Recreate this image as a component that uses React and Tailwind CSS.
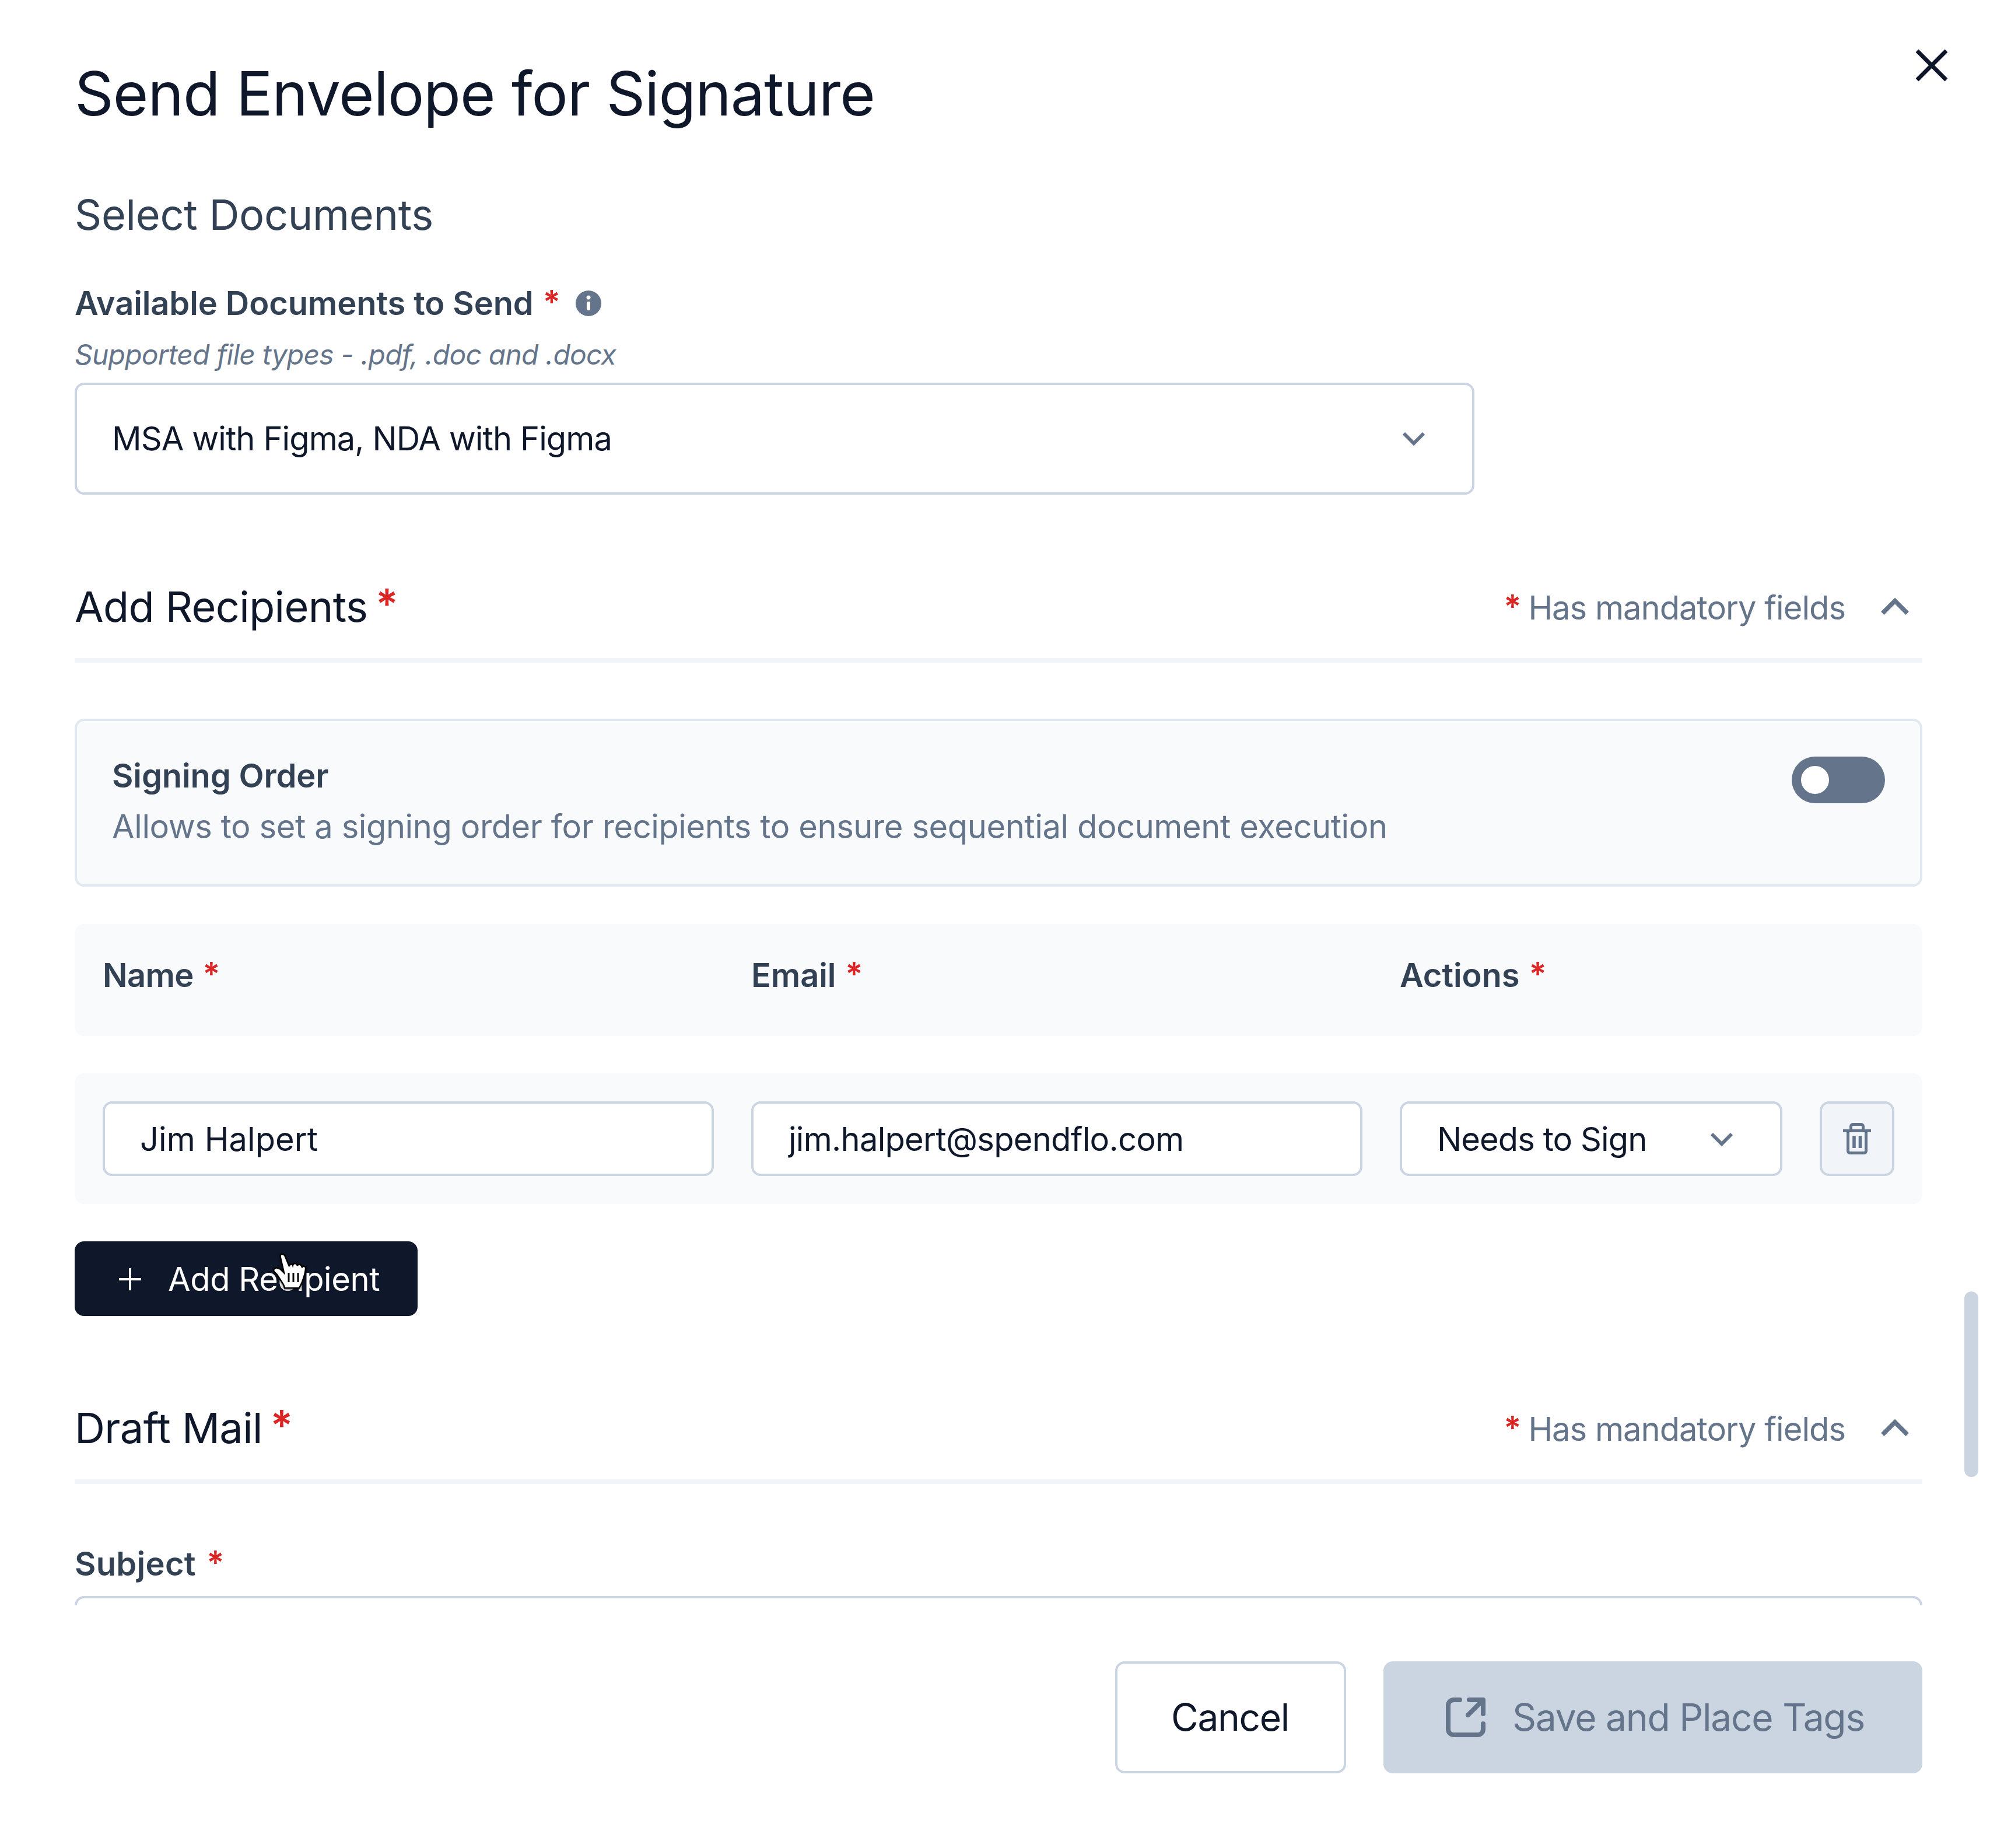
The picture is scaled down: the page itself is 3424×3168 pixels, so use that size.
const font = { fontFamily: '"Inter", "Noto Sans", sans-serif' };

function Star({ className = "" }) {
  return <span className={`text-[#dc2626] font-semibold ${className}`}>*</span>;
}

function Chevron({ up = false, className = "" }) {
  return (
    <svg viewBox="0 0 40 24" fill="none" className={className}>
      <path d={up ? "M3 21L20 4L37 21" : "M3 3L20 20L37 3"} stroke="#64748b" strokeWidth="6" />
    </svg>
  );
}

function SectionHeader({ title }) {
  return (
    <div className="flex items-center justify-between border-b-8 border-[#f1f5f9] pb-[40px] h-[144px]">
      <div className="text-[72px] leading-[96px] text-[#0f172a] tracking-[-0.6px]">
        {title} <Star className="relative -top-[5px] -ml-[6px]" />
      </div>
      <div className="flex items-center">
        <Star className="text-[56px] leading-[96px] mr-[12px]" />
        <span className="relative top-[2px] text-[56px] leading-[96px] text-[#64748b] tracking-[-0.95px]">Has mandatory fields</span>
        <Chevron up className="w-[50px] h-[30px] ml-[60px] mr-[22px]" />
      </div>
    </div>
  );
}

function Label({ children, className = "" }) {
  return <div className={`text-[56px] leading-[80px] font-semibold text-[#334155] tracking-[-0.1px] ${className}`}>{children}</div>;
}

function TextBox({ value, className = "" }) {
  return (
    <div className={`h-[128px] bg-white border-4 border-[#cbd5e1] rounded-[16px] pl-[60px] pt-[2px] flex items-center text-[56px] text-[#0f172a] ${className}`}>
      {value}
    </div>
  );
}

function HandCursor() {
  return (
    <svg viewBox="15 15 65 70" className="absolute left-[337px] top-[17px] w-[65px] h-[70px] drop-shadow-[0_2px_2px_rgba(0,0,0,0.5)]">
      <path
        d="M33 20C31 20 30 23 31 26L37 52L31 46C26 42 20 43 19 47C19 50 22 52 25 55L36 72L38 78L63 78L68 68C71 60 74 52 74 44C74 40 69 40 68 43C67 37 61 36 60 40C59 35 53 35 52 39C51 36 46 37 46 41L39 24C38 21 35 20 33 20Z"
        fill="#fff"
        stroke="#000"
        strokeWidth="2.500"
      />
      <path d="M45 52V68M53 52V68M61 52V68" stroke="#000" strokeWidth="3" />
    </svg>
  );
}

export default function App() {
  return (
    <div style={font} className="relative w-[3424px] h-[3168px] bg-white overflow-hidden">
      <div className="h-[2752px] overflow-hidden px-[128px] pt-[88px]">
        <h1 className="text-[104px] leading-[144px] font-normal text-[#0f172a] tracking-[-0.95px]">Send Envelope for Signature</h1>
        <h2 className="mt-[88px] text-[72px] leading-[96px] text-[#334155] tracking-[-0.3px]">Select Documents</h2>

        <Label className="mt-[64px] flex items-center">
          Available Documents to Send
          <Star className="ml-[16px] relative -top-[2px]" />
          <svg viewBox="0 0 44 44" className="w-[44px] h-[44px] ml-[26px]">
            <circle cx="22" cy="22" r="22" fill="#64748b" />
            <rect x="19" y="19" width="6" height="15" fill="#fff" />
            <circle cx="22" cy="12" r="3.500" fill="#fff" />
          </svg>
        </Label>
        <div className="mt-[16px] text-[48px] leading-[64px] italic text-[#64748b] tracking-[-0.8px]">Supported file types - .pdf, .doc and .docx</div>

        <div className="mt-[16px] w-[2400px] h-[192px] border-4 border-[#cbd5e1] rounded-[16px] pl-[60px] pr-[80px] flex items-center justify-between">
          <span className="text-[56px] text-[#0f172a] tracking-[-0.9px]">MSA with Figma, NDA with Figma</span>
          <Chevron className="w-[40px] h-[24px]" />
        </div>

        <div className="mt-[144px]">
          <SectionHeader title="Add Recipients" />
        </div>

        <div className="mt-[96px] h-[288px] bg-[#f8fafc] border-4 border-[#e2e8f0] rounded-[16px] pl-[60px] pr-[60px] pt-[54px] flex justify-between">
          <div>
            <div className="text-[56px] leading-[80px] font-semibold text-[#334155] tracking-[-0.1px]">Signing Order</div>
            <div className="mt-[7px] text-[56px] leading-[80px] text-[#64748b] tracking-[-0.4px]">Allows to set a signing order for recipients to ensure sequential document execution</div>
          </div>
          <div className="w-[160px] h-[80px] mt-[7px] rounded-full bg-[#64748b] flex items-center pl-[16px]">
            <div className="w-[48px] h-[48px] rounded-full bg-white" />
          </div>
        </div>

        <div className="mt-[64px] h-[192px] bg-[#f8fafc] rounded-[16px] pl-[48px] pt-[48px] grid grid-cols-[1112px_1112px_1fr]">
          <Label className="tracking-[-0.6px]">Name <Star className="ml-[2px] relative -top-[2px]" /></Label>
          <Label>Email <Star className="ml-[2px] relative -top-[2px]" /></Label>
          <Label>Actions <Star className="ml-[2px] relative -top-[2px]" /></Label>
        </div>

        <div className="mt-[64px] h-[224px] bg-[#f8fafc] rounded-[16px] px-[48px] flex items-center gap-[64px]">
          <TextBox value="Jim Halpert" className="w-[1048px] tracking-[0.1px]" />
          <TextBox value="jim.halpert@spendflo.com" className="w-[1048px] tracking-[-0.7px]" />
          <div className="w-[656px] h-[128px] bg-white border-4 border-[#cbd5e1] rounded-[16px] pl-[60px] pr-[80px] pt-[2px] flex items-center justify-between text-[56px] text-[#0f172a] tracking-[-0.9px]">
            <span>Needs to Sign</span>
            <Chevron className="w-[40px] h-[24px]" />
          </div>
          <div className="w-[128px] h-[128px] bg-[#f1f5f9] border-4 border-[#cbd5e1] rounded-[16px] flex items-center justify-center">
            <svg viewBox="0 0 48 54" fill="none" className="w-[48px] h-[54px]" stroke="#64748b" strokeWidth="5">
              <path d="M0 13.500H48M8.500 13.500V48C8.500 50 10 51.500 12 51.500H36C38 51.500 39.500 50 39.500 48V13.500" />
              <path d="M13.500 13.500V6C13.500 4 15 2.500 17 2.500H31C33 2.500 34.500 4 34.500 6V13.500" />
              <path d="M19 22V43M29.500 22V43" strokeWidth="5.600" />
            </svg>
          </div>
        </div>

        <button className="relative mt-[64px] w-[588px] h-[128px] bg-[#0f172a] rounded-[16px] pl-[76px] pt-[2px] flex items-center text-[56px] text-white tracking-[-0.4px]">
          <svg viewBox="0 0 40 40" className="w-[38px] h-[38px] mr-[46px]" fill="none" stroke="#fff" strokeWidth="4">
            <path d="M20 0V40M0 20H40" />
          </svg>
          Add Recipient
          <HandCursor />
        </button>

        <div className="mt-[144px]">
          <SectionHeader title="Draft Mail" />
        </div>

        <Label className="mt-[97px] tracking-[0.3px]">Subject <Star className="ml-[4px] relative -top-[2px]" /></Label>
        <div className="mt-[15px] h-[128px] border-4 border-[#cbd5e1] rounded-[16px]" />
      </div>

      <div className="flex justify-end gap-[64px] pr-[128px] pt-[96px]">
        <button className="w-[396px] h-[192px] border-4 border-[#cbd5e1] rounded-[16px] bg-white pr-[2px] text-[64px] text-[#0f172a] tracking-[-1.3px]">Cancel</button>
        <button className="w-[924px] h-[192px] rounded-[16px] bg-[#cbd5e1] pl-[8px] flex items-center justify-center gap-[46px] text-[64px] text-[#64748b] tracking-[-1.2px]">
          <svg viewBox="0 0 68 68" fill="none" className="w-[68px] h-[68px]" stroke="#64748b" strokeWidth="8" strokeLinecap="round" strokeLinejoin="round">
            <path d="M24 4H14C8 4 4 8 4 14V54C4 60 8 64 14 64H54C60 64 64 60 64 54V45" />
            <path d="M40 4H64V28M64 4L38 30" />
          </svg>
          Save and Place Tags
        </button>
      </div>

      <button className="absolute left-[3284px] top-[84px] w-[56px] h-[56px]" aria-label="Close">
        <svg viewBox="0 0 56 56" fill="none" stroke="#0f172a" strokeWidth="7" className="w-[56px] h-[56px]">
          <path d="M3 3L53 53M53 3L3 53" />
        </svg>
      </button>
      <div className="absolute left-[3368px] top-[2214px] w-[24px] h-[318px] rounded-full bg-[#cbd5e1]" />
    </div>
  );
}
